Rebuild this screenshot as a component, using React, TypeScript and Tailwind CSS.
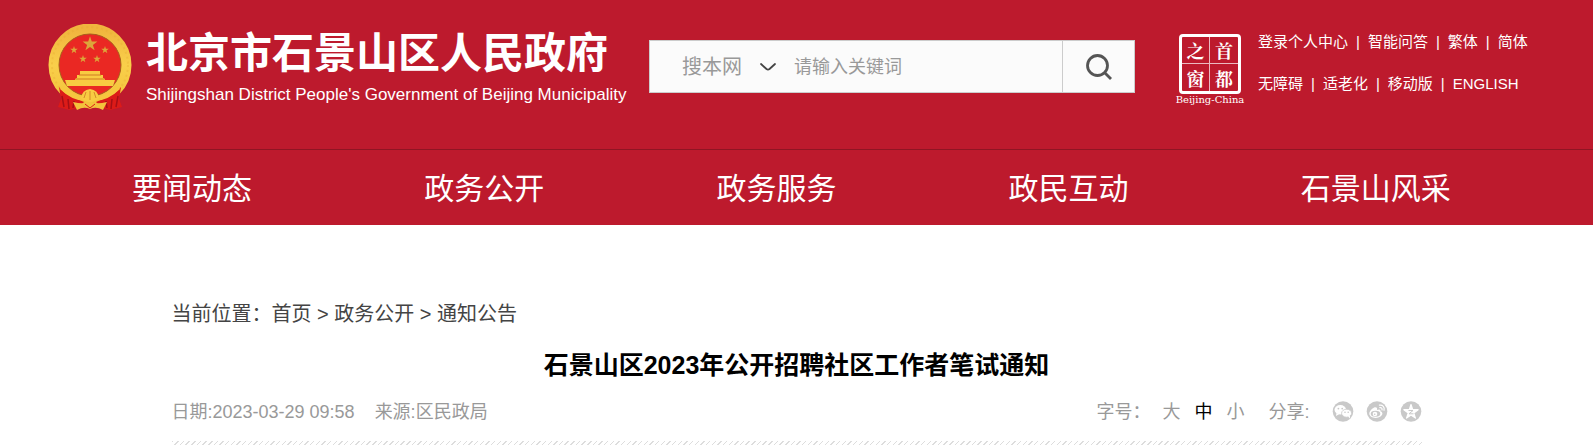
import { useState } from 'react'

const NAV_ITEMS = ['要闻动态', '政务公开', '政务服务', '政民互动', '石景山风采']

const TOP_LINKS = [
  ['登录个人中心', '智能问答', '繁体', '简体'],
  ['无障碍', '适老化', '移动版', 'ENGLISH'],
]

const FONT_SIZES = ['大', '中', '小']

const STAR = 'M0 -10L2.3 -3.1H9.5L3.7 1.2L5.9 8.1L0 3.9L-5.9 8.1L-3.7 1.2L-9.5 -3.1H-2.3Z'

// 国徽
function Emblem() {
  return (
    <svg viewBox="0 0 84 88" className="h-[88px] w-[84px] shrink-0" aria-hidden="true">
      <defs>
        <linearGradient id="gold" x1="0" y1="0" x2="0" y2="1">
          <stop offset="0" stopColor="#f0b53e" />
          <stop offset="0.5" stopColor="#f9cf4a" />
          <stop offset="1" stopColor="#f3c23c" />
        </linearGradient>
      </defs>
      <circle cx="42" cy="41" r="36" fill="none" stroke="url(#gold)" strokeWidth="11" />
      <circle cx="42" cy="41" r="38" fill="none" stroke="#e5a62f" strokeWidth="2" strokeDasharray="2 3" opacity="0.3" />
      <circle cx="42" cy="41" r="31" fill="#ea2823" stroke="#a9601c" strokeWidth="1" />
      <g fill="#dca63a">
        <path d={STAR} transform="translate(42 20) scale(0.78)" />
        <path d={STAR} transform="translate(26 26) scale(0.4)" />
        <path d={STAR} transform="translate(57 26) scale(0.4)" />
        <path d={STAR} transform="translate(35 35) scale(0.4)" />
        <path d={STAR} transform="translate(49 35) scale(0.4)" />
      </g>
      <path d="M32 47H52V51H55V54H56L57 56H67L65 62H19L17 56H27L28 54H29V51H32Z" fill="#f8cb42" />
      <path d="M31 51H53M28 55H56" stroke="#cf7c22" strokeWidth="1" />
      {/* 绶带 */}
      <path d="M11 63Q16 70 27 74L36 78L30 84L22 86L10 83L13 75Z" fill="#dc1b18" />
      <path d="M73 63Q68 70 57 74L48 78L54 84L62 86L74 83L71 75Z" fill="#dc1b18" />
      <path d="M14 72L16 83M20 75L21 85M26 77L25 84M70 72L68 83M64 75L63 85M58 77L59 84" stroke="#a50f16" strokeWidth="1.5" />
      <path d="M16 61Q24 71 34 73L38 77Q24 77 12 65Z" fill="#f6c73f" />
      <path d="M68 61Q60 71 50 73L46 77Q60 77 72 65Z" fill="#f6c73f" />
      <path d="M33 74Q34 66 42 65Q50 66 51 74Q47 78 42 78Q37 78 33 74Z" fill="#f8cb42" />
      <path d="M36 74L38 68M42 76V67M48 74L46 68" stroke="#d58a28" strokeWidth="1" />
      <path d="M25 78Q33 80 37 79Q42 77 47 79Q51 80 59 78L55 86Q48 82 42 85Q36 82 29 86Z" fill="#f3c23c" />
      <path d="M37 80L42 84L47 80" fill="none" stroke="#dc1b18" strokeWidth="1" />
    </svg>
  )
}

// 首都之窗
function CapitalSeal() {
  return (
    <a href="#" aria-label="首都之窗" className="flex w-[68px] shrink-0 flex-col items-center text-white">
      <span className="grid h-[60px] w-[62px] grid-cols-2 grid-rows-2 rounded-sm border-3 border-white font-['Noto_Serif_CJK_SC','Noto_Sans_CJK_SC',serif] text-lg leading-6 font-bold">
        <span className="flex items-center justify-center border-r border-b border-white/70">之</span>
        <span className="flex items-center justify-center border-b border-white/70">首</span>
        <span className="flex items-center justify-center border-r border-white/70">窗</span>
        <span className="flex items-center justify-center">都</span>
      </span>
      <span className="font-['DejaVu_Serif',serif] text-[10px] leading-3 whitespace-nowrap">Beijing-China</span>
    </a>
  )
}

function WechatIcon() {
  return (
    <svg viewBox="0 0 22 22" className="size-[22px]" aria-hidden="true">
      <circle cx="11" cy="10.5" r="10.3" fill="#c9c9c9" />
      <ellipse cx="8.3" cy="8.8" rx="5.8" ry="4.7" fill="#fff" />
      <path d="M4.5 12L4 15L7.5 13Z" fill="#fff" />
      <ellipse cx="14.6" cy="12.2" rx="5" ry="4" fill="#fff" stroke="#c9c9c9" strokeWidth="0.8" />
      <path d="M16 15.5L18 17.5L18 14.5Z" fill="#fff" />
      <g fill="#c9c9c9">
        <circle cx="6.4" cy="7.6" r="0.9" />
        <circle cx="10.2" cy="7.6" r="0.9" />
        <circle cx="13" cy="11.2" r="0.8" />
        <circle cx="16.2" cy="11.2" r="0.8" />
      </g>
    </svg>
  )
}

function WeiboIcon() {
  return (
    <svg viewBox="0 0 22 22" className="size-[22px]" aria-hidden="true">
      <circle cx="11" cy="10.5" r="10.3" fill="#c9c9c9" />
      <path d="M9 6.2C6.5 6.8 3.3 10 3.3 12.6C3.3 15.2 6.2 16.9 9.6 16.9C13.6 16.9 16.4 14.7 16.4 12.6C16.4 11.2 15.3 10.6 14.4 10.3C15 8.6 13.6 7.8 11 9C11.5 7.2 10.9 6 9 6.2Z" fill="#fff" />
      <ellipse cx="9.5" cy="12.8" rx="4.8" ry="3" fill="#c9c9c9" />
      <circle cx="9" cy="13" r="2.3" fill="#fff" />
      <circle cx="8.7" cy="13.2" r="0.8" fill="#c9c9c9" />
      <path d="M13.4 4.2C16.6 3.5 19 6.3 18 9.3M13.8 6.7C15.4 6.4 16.4 7.5 16 9" fill="none" stroke="#fff" strokeWidth="1.2" strokeLinecap="round" />
    </svg>
  )
}

function QzoneIcon() {
  return (
    <svg viewBox="0 0 22 22" className="size-[22px]" aria-hidden="true">
      <circle cx="11" cy="10.5" r="10.3" fill="#c9c9c9" />
      <path d={STAR} transform="translate(11 11) scale(0.75)" fill="#fff" stroke="#fff" strokeWidth="1.6" strokeLinejoin="round" />
      <path d="M8.5 9.5H13L9 12.8H13.5" fill="none" stroke="#c9c9c9" strokeWidth="1" />
    </svg>
  )
}

function SearchBox() {
  return (
    <form
      onSubmit={(e) => e.preventDefault()}
      className="flex h-[53px] w-[486px] shrink-0 border border-[#ccc] bg-[#fbfbfb]"
    >
      <div className="relative ml-8 flex w-[94px] shrink-0 items-center">
        <select aria-label="搜索范围" className="w-full appearance-none bg-transparent text-xl text-[#999] outline-none">
          <option>搜本网</option>
        </select>
        <svg viewBox="0 0 16 8" className="pointer-events-none absolute right-0 h-2 w-4" aria-hidden="true">
          <path d="M1 1L6.5 6Q8 7.2 9.5 6L15 1" fill="none" stroke="#444" strokeWidth="1.8" strokeLinecap="round" />
        </svg>
      </div>
      <input
        type="text"
        aria-label="关键词"
        placeholder="请输入关键词"
        className="ml-[18px] min-w-0 flex-1 bg-transparent text-lg text-[#666] outline-none placeholder:text-[#999]"
      />
      <button type="submit" aria-label="搜索" className="flex w-[72px] items-center justify-center border-l border-[#ccc]">
        <svg viewBox="0 0 26 26" className="size-[26px]" fill="none" stroke="#555" strokeWidth="2.8" aria-hidden="true">
          <circle cx="11.5" cy="11.5" r="10" />
          <path d="M19 19L25 25" />
        </svg>
      </button>
    </form>
  )
}

export default function App() {
  const [size, setSize] = useState('中')

  return (
    <div className="bg-white font-['Liberation_Sans','Noto_Sans_CJK_SC',sans-serif]">
      <header className="bg-[#bd1a2d] text-white">
        <div className="flex h-[149px] items-start pr-16 pl-12">
          <a href="#" className="mt-6 flex shrink-0 gap-3.5">
            <Emblem />
            <span className="block w-[467px]">
              <span className="block text-[42px] leading-[60px] font-bold whitespace-nowrap">北京市石景山区人民政府</span>
              <span className="block text-[17px] leading-[22px] whitespace-nowrap">
                Shijingshan District People's Government of Beijing Municipality
              </span>
            </span>
          </a>
          <div className="mt-10 ml-9">
            <SearchBox />
          </div>
          <div className="mt-[34px] ml-auto flex gap-3.5">
            <CapitalSeal />
            <div className="-mt-1 flex w-[271px] flex-col gap-[18px] text-[15px] leading-6">
              {TOP_LINKS.map((row) => (
                <ul key={row[0]} className="flex whitespace-nowrap">
                  {row.map((link, i) => (
                    <li key={link}>
                      {i > 0 && <span className="px-2">|</span>}
                      <a href="#">{link}</a>
                    </li>
                  ))}
                </ul>
              ))}
            </div>
          </div>
        </div>
        <nav className="grid h-[76px] grid-cols-5 items-center border-t border-[#8f1523] pt-0.5 pl-[132px] text-3xl">
          {NAV_ITEMS.map((item) => (
            <a key={item} href="#">
              {item}
            </a>
          ))}
        </nav>
      </header>

      <main className="mx-auto max-w-[1250px] pt-[74px]">
        <div className="text-xl leading-[30px] text-[#444]">
          当前位置：<a href="#">首页</a> &gt; <a href="#">政务公开</a> &gt; <a href="#">通知公告</a>
        </div>
        <h1 className="mt-[18px] text-center text-[25px] leading-9 font-bold text-black">石景山区2023年公开招聘社区工作者笔试通知</h1>
        <div className="mt-4 flex items-center justify-between pb-4 text-lg leading-[26px] text-[#999]">
          <div className="flex gap-5">
            <span>日期:2023-03-29 09:58</span>
            <span>来源:区民政局</span>
          </div>
          <div className="flex items-center">
            <span className="mr-3">字号：</span>
            <div className="flex gap-3.5">
              {FONT_SIZES.map((s) => (
                <button key={s} type="button" onClick={() => setSize(s)} className={s === size ? 'text-black' : ''}>
                  {s}
                </button>
              ))}
            </div>
            <span className="mr-[22px] ml-6">分享:</span>
            <div className="flex gap-3">
              <a href="#" aria-label="微信"><WechatIcon /></a>
              <a href="#" aria-label="微博"><WeiboIcon /></a>
              <a href="#" aria-label="QQ空间"><QzoneIcon /></a>
            </div>
          </div>
        </div>
        <div className="h-1 bg-[repeating-linear-gradient(135deg,#ddd_0_1px,#fff_1px_4px)]" />
      </main>
    </div>
  )
}
